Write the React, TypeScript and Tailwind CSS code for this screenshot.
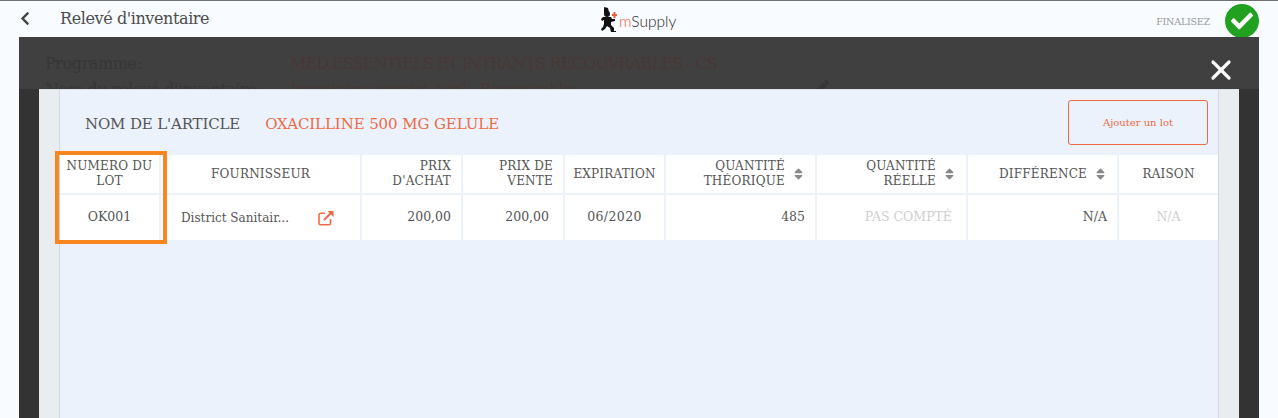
import { FaCheck, FaChevronLeft, FaPencilAlt, FaSort } from "react-icons/fa";
import { X } from "lucide-react";

const slab = "font-['DejaVu_Serif',serif]";

function Logo() {
  return (
    <div className="flex items-start">
      <svg width="18" height="26" viewBox="0 0 18 26">
        <path d="M4 0l4 1 1 4-5 1z" fill="#111" />
        <circle cx="7" cy="7" r="3" fill="#111" />
        <path d="M3 10h8l1 2h3v2l-4 1v3l3 3v3h2v1h-5l-1-4-3-2-2 3-3 2-1-2 2-2 1-3v-4l-2 1-1-2z" fill="#111" />
        <path d="M12 7h1.500V5h2v2H17v2h-1.500v2h-2V9H12z" fill="#e8603c" />
      </svg>
      <span className="ml-[1px] mt-[5px] font-['Lato',sans-serif] font-light text-[15.5px] leading-[18px] text-[#222]">
        <span className="text-[#e8603c]">m</span>Supply
      </span>
    </div>
  );
}

function Header() {
  return (
    <header className="h-[36px] flex items-center relative bg-[#f8fbff]">
      <FaChevronLeft className="ml-[19px] text-[#444] w-[12px] h-[15px] -mt-[1px]" />
      <span className={`ml-[29px] text-[#4d4d4d] text-[16px] tracking-[-0.4px] ${slab}`}>Relevé d'inventaire</span>
      <div className="absolute left-[600px] top-[6px]">
        <Logo />
      </div>
      <div className="ml-auto flex items-center mr-[19px]">
        <span className={`text-[9.5px] text-[#999] tracking-[-0.2px] mt-[6px] ${slab}`}>FINALISEZ</span>
        <span className="ml-[15px] w-[34px] h-[34px] mt-[3px] rounded-full bg-[#22a01f] flex items-center justify-center">
          <FaCheck className="text-white w-[22px] h-[22px]" />
        </span>
      </div>
    </header>
  );
}

function Th({ children, align = "center", sort = false }: { children: React.ReactNode; align?: string; sort?: boolean }) {
  const a = align === "right" ? "justify-end text-right pr-[10px]" : "justify-center text-center";
  return (
    <div className={`bg-white h-[38px] flex items-center ${a} text-[12px] leading-[15px] tracking-[0.2px] text-[#555] ${slab}`}>
      <span>{children}</span>
      {sort && <FaSort className="ml-[7px] w-[13px] h-[14px] text-[#888] shrink-0 -mt-[1px]" />}
    </div>
  );
}

function Td({ children, className = "" }: { children: React.ReactNode; className?: string }) {
  return <div className={`bg-white h-[45px] flex items-center text-[12.5px] text-[#555] ${slab} ${className}`}>{children}</div>;
}

function ExternalIcon() {
  return (
    <svg width="16" height="16" viewBox="0 0 16 16" fill="none" stroke="#ee6a45" strokeWidth="1.6">
      <path d="M12.5 9v4a1.7 1.7 0 0 1-1.7 1.700H2.700A1.700 1.700 0 0 1 1 13V5a1.700 1.700 0 0 1 1.700-1.700H7" />
      <path d="M6 10l7-7" strokeWidth="2" />
      <path d="M9.500 1h6v6z" fill="#ee6a45" stroke="none" />
    </svg>
  );
}

function Table() {
  return (
    <div className="relative">
      <div className="grid grid-cols-[99px_199px_99px_100px_99px_149px_149px_149px_99px] gap-[2px]">
        <Th>NUMERO DU LOT</Th>
        <Th>FOURNISSEUR</Th>
        <Th align="right">PRIX<br />D'ACHAT</Th>
        <Th align="right">PRIX DE<br />VENTE</Th>
        <Th>EXPIRATION</Th>
        <Th align="right" sort>QUANTITÉ<br />THÉORIQUE</Th>
        <Th align="right" sort>QUANTITÉ<br />RÉELLE</Th>
        <Th align="right" sort>DIFFÉRENCE</Th>
        <Th>RAISON</Th>

        <Td className="justify-center">OK001</Td>
        <Td className="pl-[20px] pr-[26px] justify-between text-[12px]">
          <span>District Sanitair...</span>
          <ExternalIcon />
        </Td>
        <Td className="justify-end pr-[10px]">200,00</Td>
        <Td className="justify-end pr-[14px]">200,00</Td>
        <Td className="justify-center tracking-[0.4px]">06/2020</Td>
        <Td className="justify-end pr-[10px]">485</Td>
        <Td className="justify-end pr-[14px] text-[#cfcfcf]">PAS COMPTÉ</Td>
        <Td className="justify-end pr-[10px] text-[#444]">N/A</Td>
        <Td className="justify-center text-[#cfcfcf]">N/A</Td>
      </div>
      {/* highlight drawn on top of the first column */}
      <div className="absolute -left-[5px] -top-[4px] w-[112px] h-[93px] border-[4px] border-[#fa861f] pointer-events-none" />
    </div>
  );
}

function Backdrop() {
  return (
    <div className={`h-[52px] overflow-hidden relative bg-[#404040] text-[16px] leading-[26px] pt-[14px] pl-[26px] ${slab}`}>
      <div className="flex text-[#363636]">
        <span className="w-[245px] shrink-0 tracking-[-0.4px]">Programme:</span>
        <span className="text-[#473735] tracking-[-0.85px] whitespace-nowrap">MED.ESSENTIELS ET INTRANTS RECOUVRABLES - CS</span>
      </div>
      <div className="flex text-[#363636]">
        <span className="w-[245px] shrink-0 tracking-[-0.4px]">Nom du relevé d'inventaire:</span>
        <span className="text-[#473735] tracking-[-0.85px] whitespace-nowrap">Inventaire complet Avril - Recouvrables</span>
      </div>
      <FaPencilAlt className="absolute left-[797px] top-[43px] w-[13px] h-[13px] text-[#363636]" />
      <X className="absolute left-[1186px] top-[17px] text-white w-[32px] h-[32px]" strokeWidth={2.4} />
    </div>
  );
}

export default function App() {
  return (
    <div className="w-[1278px] h-[418px] overflow-hidden bg-[#f8fbff] border-t border-[#707070] flex flex-col">
      <Header />
      <main className="mx-[19px] flex-1 flex flex-col min-h-0">
        <Backdrop />
        <div className="flex-1 bg-[#333333] px-[20px] min-h-0">
          <div className="h-full bg-[#eaedf0] px-[20px] border-t border-[#dfe3e8]">
            <div className="h-full bg-[#ebf2fb] border-x border-[#d3d8e0]">
              <div className="h-[65px] flex items-center pl-[25px] pr-[10px]">
                <span className={`mt-[3px] text-[15px] tracking-[-0.15px] text-[#555] ${slab}`}>NOM DE L'ARTICLE</span>
                <span className={`mt-[3px] ml-[25px] text-[15px] tracking-[-0.1px] text-[#ee6a45] ${slab}`}>OXACILLINE 500 MG GELULE</span>
                <button className={`ml-auto w-[140px] h-[45px] border border-[#ee6a45] rounded-[3px] text-[10px] text-[#ee6a45] ${slab}`}>Ajouter un lot</button>
              </div>
              <Table />
            </div>
          </div>
        </div>
      </main>
    </div>
  );
}
